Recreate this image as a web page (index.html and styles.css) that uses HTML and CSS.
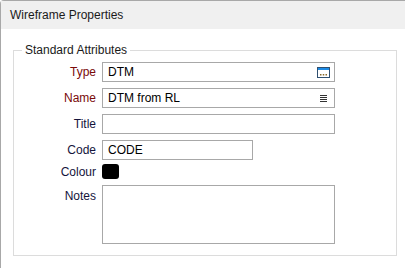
FILE: index.html
```html
<!DOCTYPE html>
<html lang="en">
<head>
  <meta charset="UTF-8">
  <title>Wireframe Properties</title>
  <link rel="stylesheet" href="styles.css">
</head>
<body>
  <div class="window">
    <header class="window-header">Wireframe Properties</header>

    <div class="group">
      <div class="group-title">Standard Attributes</div>

      <div class="row">
        <label class="req">Type</label>
        <div class="field">
          <span>DTM</span>
          <svg class="icon" width="13" height="11" viewBox="0 0 13 11">
            <rect x="0.5" y="0.5" width="12" height="10" fill="#fff" stroke="#2f4f6f"/>
            <rect x="1" y="1" width="11" height="2" fill="#1e8ce6"/>
            <rect x="3" y="7" width="1.5" height="1.5" fill="#8a6a2a"/>
            <rect x="5.75" y="7" width="1.5" height="1.5" fill="#8a6a2a"/>
            <rect x="8.5" y="7" width="1.5" height="1.5" fill="#8a6a2a"/>
          </svg>
        </div>
      </div>

      <div class="row">
        <label class="req">Name</label>
        <div class="field">
          <span>DTM from RL</span>
          <svg class="icon" width="13" height="11" viewBox="0 0 13 11">
            <path d="M3 2.5h7M3 4.5h7M3 6.5h7M3 8.5h7" stroke="#333" stroke-width="1"/>
          </svg>
        </div>
      </div>

      <div class="row">
        <label>Title</label>
        <div class="field"></div>
      </div>

      <div class="row row-code">
        <label>Code</label>
        <div class="field field-short"><span>CODE</span></div>
      </div>

      <div class="row row-colour">
        <label>Colour</label>
        <div class="swatch"></div>
      </div>

      <div class="row row-notes">
        <label>Notes</label>
        <div class="field field-notes"></div>
      </div>
    </div>
  </div>
</body>
</html>
```

FILE: styles.css
```css
* {
  margin: 0;
  padding: 0;
  box-sizing: border-box;
}

body {
  font-family: 'Liberation Sans', Arial, sans-serif;
  font-size: 12px;
  color: #1a1a1a;
  background: #fff;
}

.window {
  height: 268px;
  border-top: 1px solid #a8a8a8;
  border-left: 1px solid #a8a8a8;
  border-top-left-radius: 4px;
  background: #fff;
}

.window-header {
  height: 28px;
  line-height: 28px;
  padding-left: 9px;
  background: #f0f0f0;
  color: #1a1a1a;
}

.group {
  position: relative;
  width: 384px;
  height: 206px;
  margin: 21px 0 0 12px;
  padding-top: 11px;
  border: 1px solid #dcdcdc;
}

.group-title {
  position: absolute;
  top: -8px;
  left: 8px;
  padding: 0 3px;
  line-height: 15px;
  background: #fff;
}

.row {
  display: flex;
  align-items: center;
  margin-bottom: 6px;
}

.row label {
  width: 82px;
  margin-right: 6px;
  text-align: right;
  color: #14143c;
}

.row label.req {
  color: #7a0a0a;
}

.field {
  display: flex;
  align-items: center;
  justify-content: space-between;
  width: 233px;
  height: 20px;
  padding: 0 4px 0 5px;
  border: 1px solid #a8a8a8;
  color: #000;
}

.field-short {
  width: 151px;
}

.row-code {
  margin-bottom: 4px;
}

.swatch {
  width: 17px;
  height: 15px;
  border-radius: 3px;
  background: #000;
}

.row-notes {
  align-items: flex-start;
}

.row-notes label {
  padding-top: 4px;
}

.field-notes {
  height: 59px;
}
```
